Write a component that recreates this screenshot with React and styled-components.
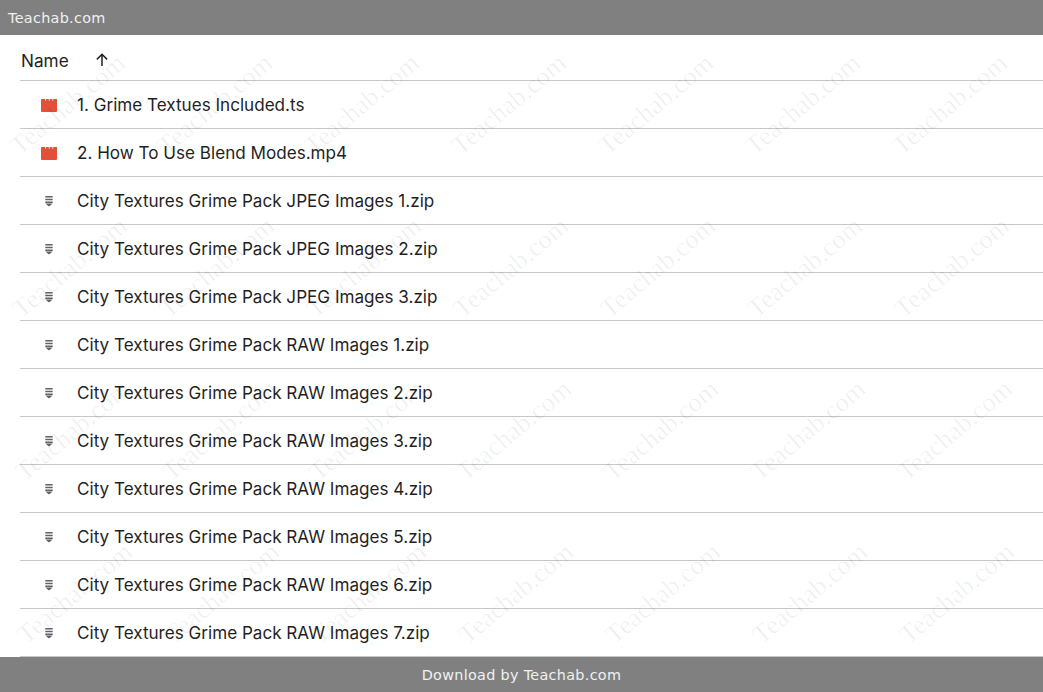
import React from 'react';
import styled, { createGlobalStyle } from 'styled-components';

const files = [
    { name: '1. Grime Textues Included.ts', type: 'video' },
    { name: '2. How To Use Blend Modes.mp4', type: 'video' },
    { name: 'City Textures Grime Pack JPEG Images 1.zip', type: 'zip' },
    { name: 'City Textures Grime Pack JPEG Images 2.zip', type: 'zip' },
    { name: 'City Textures Grime Pack JPEG Images 3.zip', type: 'zip' },
    { name: 'City Textures Grime Pack RAW Images 1.zip', type: 'zip' },
    { name: 'City Textures Grime Pack RAW Images 2.zip', type: 'zip' },
    { name: 'City Textures Grime Pack RAW Images 3.zip', type: 'zip' },
    { name: 'City Textures Grime Pack RAW Images 4.zip', type: 'zip' },
    { name: 'City Textures Grime Pack RAW Images 5.zip', type: 'zip' },
    { name: 'City Textures Grime Pack RAW Images 6.zip', type: 'zip' },
    { name: 'City Textures Grime Pack RAW Images 7.zip', type: 'zip' },
];

const VideoIcon = () => (
    <svg width="16" height="13" viewBox="0 0 16 13">
        <path
            fill="#e34f3b"
            d="M0 1 Q0 0 1 0 H4 L4.5 1.7 H5.3 L4.8 0 H7.6 L8.1 1.7 H8.9 L8.4 0 H11.2 L11.7 1.7 H12.5 L12 0 H16 V12 Q16 13 15 13 H1 Q0 13 0 12 Z"
        />
    </svg>
);

const ZipIcon = () => (
    <svg width="8" height="11" viewBox="0 0 8 11">
        <path fill="#5f6368" d="M0.3 0 H7.7 V1.5 H0.3 Z M0.3 2.7 H7.7 V4.2 H0.3 Z M0.3 5.4 H7.7 V6.9 H0.3 Z M0.3 7.6 H7.7 L4 10.6 Z" />
    </svg>
);

const SortArrow = () => (
    <svg width="14" height="14" viewBox="0 0 14 14" fill="none" stroke="#202124" strokeWidth="1.5">
        <path d="M7 13 V1.6 M1.9 6.4 L7 1.3 L12.1 6.4" />
    </svg>
);

const App = () => {
    return (
        <>
            <GlobalStyle />
            <Page>
                <TopBar>Teachab.com</TopBar>
                <Main>
                    <Header>
                        <span>Name</span>
                        <SortButton><SortArrow /></SortButton>
                    </Header>
                    {files.map((file) => (
                        <Row key={file.name}>
                            <IconCell>{file.type === 'video' ? <VideoIcon /> : <ZipIcon />}</IconCell>
                            <FileName>{file.name}</FileName>
                        </Row>
                    ))}
                    <Watermarks>
                        {[0, 1, 2, 3].map((row) => (
                            <MarkRow key={row} $row={row}>
                                {[0, 1, 2, 3, 4, 5, 6].map((col) => (
                                    <Mark key={col}>Teachab.com</Mark>
                                ))}
                            </MarkRow>
                        ))}
                    </Watermarks>
                </Main>
                <BottomBar>Download by Teachab.com</BottomBar>
            </Page>
        </>
    );
};

export default App;

const GlobalStyle = createGlobalStyle`
    html, body {
        margin: 0;
        padding: 0;
        background: #fff;
    }
`;

const Page = styled.div`
    display: flex;
    flex-direction: column;
    height: 692px;
    overflow: hidden;
    font-family: Inter, 'Liberation Sans', sans-serif;
`;

const TopBar = styled.div`
    display: flex;
    align-items: center;
    flex: 0 0 35px;
    padding-left: 8px;
    background: #808080;
    color: #f1f1f1;
    font-family: 'DejaVu Sans', sans-serif;
    font-size: 14.4px;
    letter-spacing: 0.3px;
`;

const BottomBar = styled.div`
    display: flex;
    align-items: center;
    justify-content: center;
    flex: 0 0 35px;
    background: #808080;
    color: #f1f1f1;
    font-family: 'DejaVu Sans', sans-serif;
    font-size: 14.4px;
    letter-spacing: 0.3px;
`;

const Main = styled.div`
    position: relative;
    flex: 1;
    overflow: hidden;
    padding-left: 20px;
`;

const Header = styled.div`
    display: flex;
    align-items: center;
    height: 46px;
    padding-left: 1px;
    padding-top: 6px;
    box-sizing: border-box;
    border-bottom: 1px solid #c7c7c7;
    color: #1f1f1f;
    font-size: 17.2px;
`;

const SortButton = styled.span`
    display: flex;
    margin-left: 26px;
    margin-top: -1px;
`;

const Row = styled.div`
    display: flex;
    align-items: center;
    height: 47px;
    border-bottom: 1px solid #c7c7c7;
`;

const IconCell = styled.div`
    display: flex;
    justify-content: center;
    width: 57px;
    padding: 1px 0 0 1px;
    box-sizing: border-box;
`;

const FileName = styled.span`
    color: #1f1f1f;
    font-size: 17.1px;
`;

const Watermarks = styled.div`
    position: absolute;
    top: 0;
    left: 0;
    display: flex;
    flex-direction: column;
    gap: 133px;
    padding-top: 54px;
    pointer-events: none;
`;

const MarkRow = styled.div`
    display: flex;
    height: 30px;
    margin-left: ${(p) => p.$row * 2.4 - 6}px;
`;

const Mark = styled.div`
    flex: 0 0 147px;
    width: 147px;
    color: rgba(0, 0, 0, 0.06);
    font-family: 'Liberation Serif', serif;
    font-size: 26.5px;
    line-height: 30px;
    white-space: nowrap;
    text-align: center;
    transform: rotate(-40deg);
`;
